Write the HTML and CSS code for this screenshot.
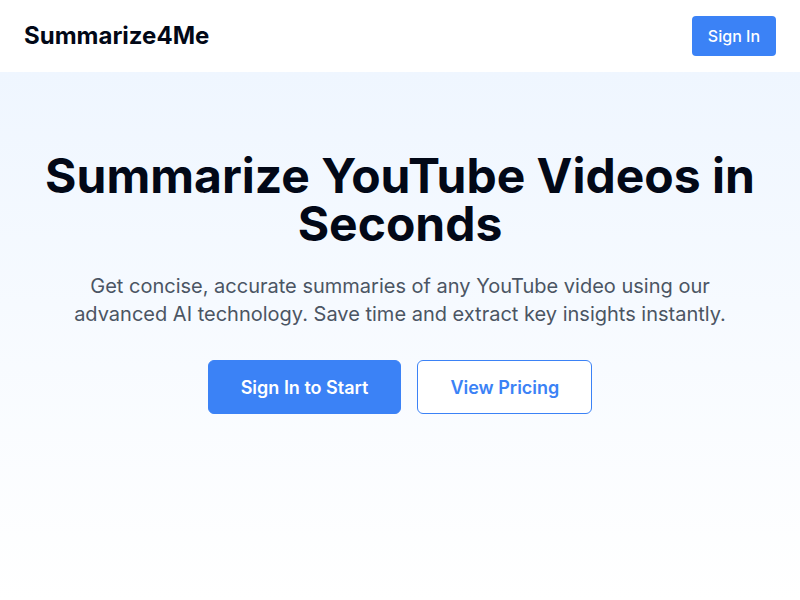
FILE: index.html
```html
<!DOCTYPE html>
<html lang="en">
<head>
<meta charset="utf-8">
<title>Summarize4Me</title>
<link rel="stylesheet" href="styles.css">
</head>
<body>
<header class="header">
  <div class="logo">Summarize4Me</div>
  <button class="btn-header">Sign In</button>
</header>
<main class="hero">
  <h1 class="title">Summarize YouTube Videos in Seconds</h1>
  <p class="lead">Get concise, accurate summaries of any YouTube video using our advanced AI technology. Save time and extract key insights instantly.</p>
  <div class="actions">
    <button class="btn-primary">Sign In to Start</button>
    <button class="btn-outline">View Pricing</button>
  </div>
</main>
</body>
</html>
```
FILE: styles.css
```css
* { box-sizing: border-box; }
html, body { margin: 0; padding: 0; }
body {
  font-family: Inter, "Noto Sans", sans-serif;
  background: #ffffff;
  color: #020817;
}
.header {
  height: 72px;
  display: flex;
  align-items: center;
  justify-content: space-between;
  padding: 16px 24px;
  background: #ffffff;
}
.logo {
  font-size: 24px;
  font-weight: 700;
  line-height: 32px;
  color: #020817;
}
.btn-header {
  font-family: inherit;
  font-size: 16px;
  font-weight: 500;
  line-height: 24px;
  padding: 8px 16px;
  background: #3b82f6;
  color: #ffffff;
  border: none;
  border-radius: 4px;
}
.hero {
  min-height: calc(100vh - 72px);
  background: linear-gradient(to bottom, #eff6ff, #ffffff);
  padding: 80px 24px 0;
  display: flex;
  flex-direction: column;
  align-items: center;
  text-align: center;
}
.title {
  margin: 0 0 24px;
  font-size: 48px;
  line-height: 48px;
  font-weight: 700;
  color: #020817;
  max-width: 720px;
}
.lead {
  margin: 0 0 32px;
  font-size: 20px;
  line-height: 28px;
  color: #4b5563;
  max-width: 672px;
}
.actions {
  display: flex;
  gap: 16px;
}
.btn-primary, .btn-outline {
  font-family: inherit;
  font-size: 18px;
  font-weight: 600;
  line-height: 28px;
  padding: 13px 32px 11px;
  border-radius: 6px;
}
.btn-primary {
  background: #3b82f6;
  color: #ffffff;
  border: 1px solid #3b82f6;
}
.btn-outline {
  background: #ffffff;
  color: #3b82f6;
  border: 1px solid #3b82f6;
}
```
